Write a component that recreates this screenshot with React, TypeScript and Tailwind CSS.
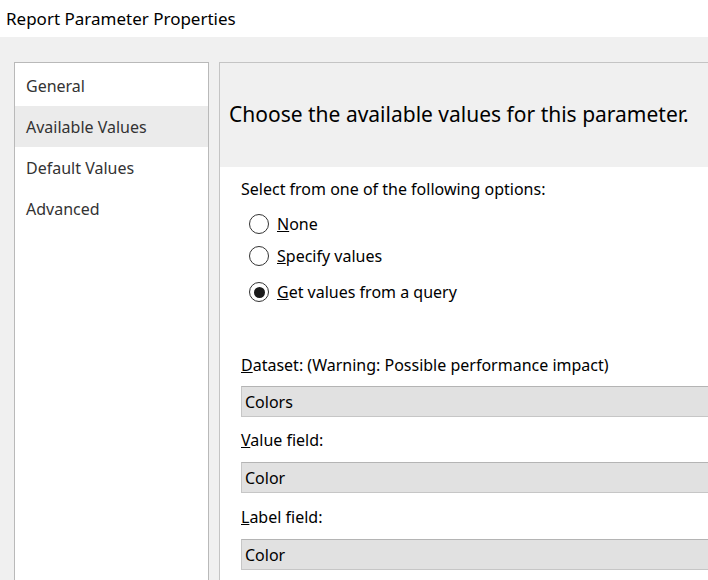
import { useState } from 'react';

const sections = ['General', 'Available Values', 'Default Values', 'Advanced'];

function Radio({ checked, children }: { checked?: boolean; children: React.ReactNode }) {
  return (
    <div className="flex h-[24px] items-center gap-[8px]">
      <span className="flex h-[20px] w-[20px] items-center justify-center rounded-full border-[1.5px] border-[#333]">
        {checked && <span className="h-[11px] w-[11px] rounded-full bg-[#1a1a1a]" />}
      </span>
      <span>{children}</span>
    </div>
  );
}

function Field({ value }: { value: string }) {
  return (
    <div className="mr-[-20px] flex h-[31px] items-center border border-[#c6c6c6] border-t-[#b4b4b4] bg-[#e1e1e1] pl-[3px]">
      {value}
    </div>
  );
}

export default function App() {
  const [active] = useState('Available Values');

  return (
    <div className="h-[580px] w-[708px] overflow-hidden bg-[#f0f0f0] font-['Noto_Sans',sans-serif] text-[#1a1a1a]">
      <div className="flex h-[37px] items-center bg-white pl-[6px] text-[17px] text-black">
        Report Parameter Properties
      </div>

      <div className="flex gap-[10px] pl-[14px] pt-[25px]">
        {/* Sidebar */}
        <div className="h-[540px] w-[195px] shrink-0 border border-[#b9b9b9] bg-white pt-[2px] text-[16px] text-[#333]">
          {sections.map((s) => (
            <div
              key={s}
              className={`flex h-[41px] items-center pl-[11px] ${s === active ? 'bg-[#ebebeb]' : ''}`}
            >
              {s}
            </div>
          ))}
        </div>

        {/* Page */}
        <div className="h-[540px] flex-1 overflow-hidden border-l border-t border-[#c4c4c4] bg-white">
          <div className="flex h-[104px] items-center whitespace-nowrap bg-[#f0f0f0] pl-[9px] text-[21px] text-black">
            Choose the available values for this parameter.
          </div>
          <div className="whitespace-nowrap pl-[21px] pt-[10px] text-[16px] text-black">
            <div className="leading-[24px]">Select from one of the following options:</div>
            <div className="mt-[11px] flex flex-col pl-[8px]">
              <Radio><u>N</u>one</Radio>
              <div className="mt-[8px]">
                <Radio><u>S</u>pecify values</Radio>
              </div>
              <div className="mt-[12px]">
                <Radio checked><u>G</u>et values from a query</Radio>
              </div>
            </div>

            <div className="mt-[49px] leading-[24px]"><u>D</u>ataset: (Warning: Possible performance impact)</div>
            <div className="mt-[9px]"><Field value="Colors" /></div>
            <div className="mt-[11px] leading-[24px]"><u>V</u>alue field:</div>
            <div className="mt-[10px]"><Field value="Color" /></div>
            <div className="mt-[12px] leading-[24px]"><u>L</u>abel field:</div>
            <div className="mt-[10px]"><Field value="Color" /></div>
          </div>
        </div>
      </div>
    </div>
  );
}
